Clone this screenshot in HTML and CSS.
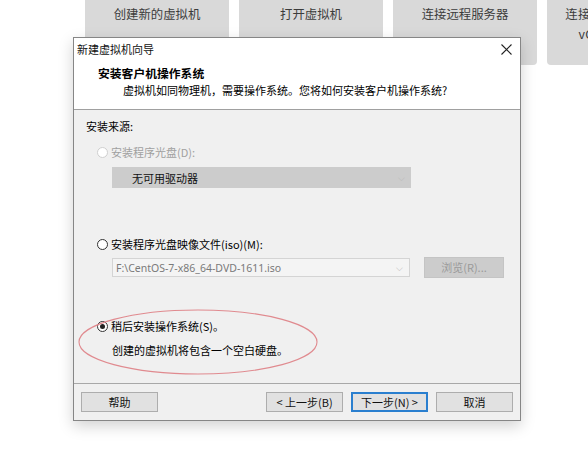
FILE: index.html
```html
<!DOCTYPE html>
<html lang="zh-CN">
<head>
<meta charset="utf-8">
<title>新建虚拟机向导</title>
<link rel="stylesheet" href="styles.css">
</head>
<body>
<div class="tiles">
  <div class="tile">创建新的虚拟机</div>
  <div class="tile">打开虚拟机</div>
  <div class="tile">连接远程服务器</div>
  <div class="tile tile-wide">连接到 VMware<br>vCloud Air</div>
</div>

<div class="dialog">
  <div class="titlebar">
    <span class="title-text">新建虚拟机向导</span>
    <svg class="close" width="11" height="11" viewBox="0 0 11 11"><path d="M0.5 0.5 L10.5 10.5 M10.5 0.5 L0.5 10.5" stroke="#222" stroke-width="1.1" fill="none"/></svg>
  </div>
  <div class="header">
    <div class="h-title">安装客户机操作系统</div>
    <div class="h-sub">虚拟机如同物理机，需要操作系统。您将如何安装客户机操作系统?</div>
  </div>
  <div class="body">
    <div class="label">安装来源:</div>
    <div class="radio-row disabled"><span class="radio"></span><span>安装程序光盘(D):</span></div>
    <div class="drive-select"><span>无可用驱动器</span><span class="arrow">⌵</span></div>
    <div class="radio-row iso-row"><span class="radio"></span><span>安装程序光盘映像文件(iso)(M):</span></div>
    <div class="iso-line">
      <div class="iso-input"><span>F:\CentOS-7-x86_64-DVD-1611.iso</span><span class="arrow">⌵</span></div>
      <div class="browse">浏览(R)...</div>
    </div>
    <div class="radio-row later-row"><span class="radio checked"></span><span>稍后安装操作系统(S)。</span></div>
    <div class="desc">创建的虚拟机将包含一个空白硬盘。</div>
    <svg class="ellipse" width="244" height="70" viewBox="0 0 244 70"><ellipse cx="122" cy="35" rx="119" ry="32" fill="none" stroke="#e08a8f" stroke-width="1.1"/></svg>
  </div>
  <div class="footer">
    <div class="btn">帮助</div>
    <div class="spacer"></div>
    <div class="btn">&lt; 上一步(B)</div>
    <div class="btn primary">下一步(N) &gt;</div>
    <div class="btn">取消</div>
  </div>
</div>
</body>
</html>
```

FILE: styles.css
```css
html, body {
  margin: 0;
  padding: 0;
  background: #ffffff;
  width: 588px;
  height: 454px;
  overflow: hidden;
  font-family: "Noto Sans CJK SC", "Noto Sans", sans-serif;
  color: #000;
}

.tiles {
  display: flex;
  gap: 10px;
  padding-left: 85px;
}

.tile {
  flex: 0 0 144px;
  height: 65px;
  background: #d9d9d9;
  border-radius: 0 0 4px 4px;
  color: #3c3c3c;
  font-size: 12.4px;
  line-height: 20px;
  text-align: center;
  padding-top: 4px;
  box-sizing: border-box;
}

.tile-wide {
  padding-right: 18px;
  letter-spacing: 0.4px;
}

.dialog {
  position: absolute;
  left: 73px;
  top: 37px;
  width: 448px;
  height: 384px;
  box-sizing: border-box;
  border: 1px solid #868686;
  background: #f0f0f0;
  box-shadow: 0 5px 14px rgba(0, 0, 0, 0.18);
  display: flex;
  flex-direction: column;
  font-size: 11px;
}

.titlebar {
  height: 22px;
  background: #fff;
  display: flex;
  align-items: center;
  padding-left: 3px;
  padding-right: 8px;
  justify-content: space-between;
}

.title-text {
  font-size: 11px;
  color: #111;
}

.header {
  height: 50px;
  background: #fff;
  border-bottom: 1px solid #a0a0a0;
  box-sizing: border-box;
  padding-top: 4px;
}

.h-title {
  font-weight: bold;
  font-size: 11.8px;
  line-height: 18px;
  padding-left: 24px;
}

.h-sub {
  font-size: 11px;
  line-height: 16px;
  padding-left: 49px;
}

.body {
  position: relative;
  flex: 1;
  border-bottom: 1px solid #a8a8a8;
  padding-left: 12px;
  padding-top: 8px;
  box-sizing: border-box;
}

.label {
  line-height: 16px;
}

.radio-row {
  display: flex;
  align-items: center;
  gap: 3px;
  margin-left: 11px;
  line-height: 16px;
  margin-top: 10px;
}

.radio-row.disabled {
  color: #a0a0a0;
}

.radio {
  width: 11px;
  height: 11px;
  border: 1px solid #333;
  border-radius: 50%;
  box-sizing: border-box;
  background: #fff;
  position: relative;
}

.disabled .radio {
  border-color: #cfcfcf;
}

.radio.checked::after {
  content: "";
  position: absolute;
  left: 2px;
  top: 2px;
  width: 5px;
  height: 5px;
  border-radius: 50%;
  background: #222;
}

.drive-select {
  margin-left: 26px;
  margin-top: 7px;
  width: 299px;
  height: 21px;
  background: #cccccc;
  display: flex;
  align-items: center;
  justify-content: space-between;
  padding: 0 6px 0 20px;
  box-sizing: border-box;
  color: #111;
}

.arrow {
  color: #b8b8b8;
  font-size: 9px;
}

.iso-row {
  margin-top: 48px;
}

.iso-line {
  display: flex;
  align-items: center;
  margin-left: 26px;
  margin-top: 5px;
  gap: 14px;
}

.iso-input {
  width: 298px;
  height: 19px;
  border: 1px solid #d4d4d4;
  background: #f4f4f4;
  box-sizing: border-box;
  display: flex;
  align-items: center;
  justify-content: space-between;
  padding: 0 6px 0 3px;
  color: #7a7a7a;
  font-family: "Noto Sans", "Noto Sans CJK SC", sans-serif;
  font-size: 10.5px;
}

.browse {
  width: 80px;
  height: 21px;
  background: #cccccc;
  border: 1px solid #c4c4c4;
  box-sizing: border-box;
  color: #9a9a9a;
  text-align: center;
  line-height: 19px;
}

.later-row {
  margin-top: 40px;
}

.desc {
  margin-left: 26px;
  margin-top: 8px;
  line-height: 16px;
}

.ellipse {
  position: absolute;
  left: 2px;
  top: 197px;
}

.footer {
  height: 36px;
  display: flex;
  align-items: center;
  padding: 0 7px 0 7px;
  gap: 8px;
  box-sizing: border-box;
}

.spacer {
  flex: 1;
}

.btn {
  width: 77px;
  height: 20px;
  box-sizing: border-box;
  border: 1px solid #adadad;
  background: #e1e1e1;
  text-align: center;
  line-height: 18px;
  font-size: 11px;
  color: #111;
}

.btn.primary {
  border: 2px solid #2a7fcf;
  line-height: 16px;
}
```
